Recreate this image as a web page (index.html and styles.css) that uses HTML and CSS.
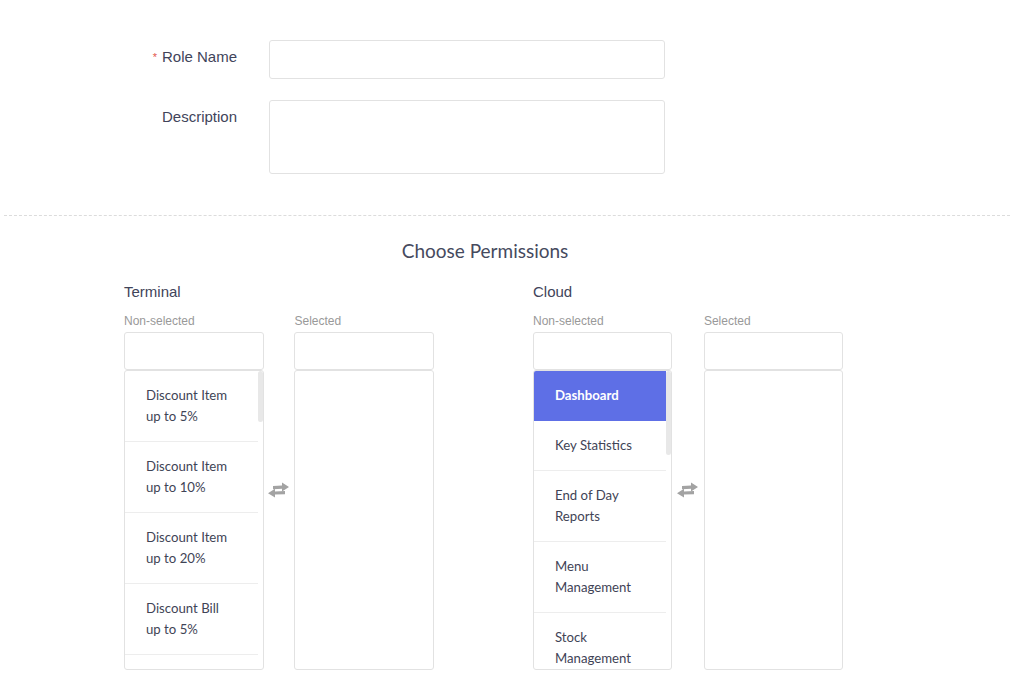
FILE: index.html
```html
<!DOCTYPE html>
<html>
<head>
<meta charset="utf-8">
<link rel="stylesheet" href="styles.css">
</head>
<body>
<div class="form">
  <div class="row">
    <label class="label"><span class="req">*</span>Role Name</label>
    <input class="input" type="text">
  </div>
  <div class="row">
    <label class="label">Description</label>
    <textarea class="textarea"></textarea>
  </div>
</div>
<div class="divider"></div>
<h2 class="title">Choose Permissions</h2>
<div class="groups">
  <div class="group">
    <div class="group-name">Terminal</div>
    <div class="dual">
      <div class="col">
        <div class="cap">Non-selected</div>
        <div class="filter"></div>
        <div class="list">
          <ul class="items">
            <li class="item">Discount Item<br>up to 5%</li>
            <li class="item">Discount Item<br>up to 10%</li>
            <li class="item">Discount Item<br>up to 20%</li>
            <li class="item">Discount Bill<br>up to 5%</li>
          </ul>
          <div class="thumb thumb-t"></div>
        </div>
      </div>
      <div class="swap">
        <svg width="24" height="18" viewBox="0 0 24 18"><path d="M6 5 L15 4.6 L15 1.5 L22 6 L15 10.5 L15 7.8 L6 8.2 Z" fill="#a3a3a3"/><path d="M18 10 L8 10.4 L8 7.8 L1 12.3 L8 16.6 L8 13.6 L18 13.2 Z" fill="#a3a3a3"/></svg>
      </div>
      <div class="col">
        <div class="cap">Selected</div>
        <div class="filter"></div>
        <div class="list"></div>
      </div>
    </div>
  </div>
  <div class="group">
    <div class="group-name">Cloud</div>
    <div class="dual">
      <div class="col">
        <div class="cap">Non-selected</div>
        <div class="filter"></div>
        <div class="list">
          <ul class="items">
            <li class="item active">Dashboard</li>
            <li class="item">Key Statistics</li>
            <li class="item">End of Day<br>Reports</li>
            <li class="item">Menu<br>Management</li>
            <li class="item">Stock<br>Management</li>
          </ul>
          <div class="thumb thumb-c"></div>
        </div>
      </div>
      <div class="swap swap-c">
        <svg width="24" height="18" viewBox="0 0 24 18"><path d="M6 5 L15 4.6 L15 1.5 L22 6 L15 10.5 L15 7.8 L6 8.2 Z" fill="#a3a3a3"/><path d="M18 10 L8 10.4 L8 7.8 L1 12.3 L8 16.6 L8 13.6 L18 13.2 Z" fill="#a3a3a3"/></svg>
      </div>
      <div class="col">
        <div class="cap">Selected</div>
        <div class="filter"></div>
        <div class="list"></div>
      </div>
    </div>
  </div>
</div>
</body>
</html>
```
FILE: styles.css
```css
html, body {
  margin: 0;
  padding: 0;
  background: #fff;
}
body {
  font-family: "Liberation Sans", Arial, sans-serif;
  color: #444759;
  width: 1010px;
  height: 694px;
  overflow: hidden;
}
.form {
  padding-top: 40px;
}
.row {
  display: flex;
  align-items: flex-start;
  margin-bottom: 21px;
}
.row:last-child {
  margin-bottom: 0;
}
.label {
  width: 237px;
  box-sizing: border-box;
  text-align: right;
  font-size: 15px;
  line-height: 20px;
  padding-top: 7px;
  margin-right: 32px;
  color: #41445a;
}
.req {
  color: #e2574c;
  font-size: 11px;
  margin-right: 5px;
  vertical-align: 1px;
}
.input, .textarea {
  box-sizing: border-box;
  width: 396px;
  border: 1px solid #e2e2e2;
  border-radius: 3px;
  margin: 0;
  padding: 0;
  outline: none;
  background: #fff;
  resize: none;
}
.input { height: 39px; }
.textarea { height: 74px; display: block; }
.divider {
  margin: 41px 0 0 4px;
  border-top: 1px dashed #dcdcdc;
}
.title {
  margin: 23px 0 0 0;
  padding-right: 40px;
  text-align: center;
  font-family: Lato, "Liberation Sans", sans-serif;
  font-weight: 400;
  font-size: 19px;
  line-height: 24px;
  color: #464a5e;
}
.groups {
  display: flex;
  gap: 99px;
  padding-left: 124px;
  margin-top: 19px;
}
.group {
  width: 310px;
}
.group-name {
  font-size: 15px;
  line-height: 20px;
  color: #41445a;
}
.dual {
  display: flex;
  margin-top: 11px;
}
.col {
  width: 140px;
}
.cap {
  font-size: 12px;
  line-height: 16px;
  color: #999;
  margin-bottom: 3px;
}
.filter {
  box-sizing: border-box;
  height: 38px;
  border: 1px solid #e2e2e2;
  border-radius: 3px;
}
.list {
  position: relative;
  box-sizing: border-box;
  height: 300px;
  margin-top: 0;
  border: 1px solid #e2e2e2;
  border-radius: 3px;
  overflow: hidden;
}
.items {
  list-style: none;
  margin: 0 5px 0 0;
  padding: 0;
}
.item {
  font-family: Lato, "Liberation Sans", sans-serif;
  font-size: 13.2px;
  line-height: 21px;
  padding: 14px 8px 14px 21px;
  border-bottom: 1px solid #ededed;
  color: #3f4456;
}
.item.active {
  background: #5e6fe6;
  color: #fff;
  font-weight: 700;
  border-bottom-color: #5e6fe6;
}
.thumb {
  position: absolute;
  right: 0;
  top: 0;
  width: 5px;
  border-radius: 3px;
  background: #e8e8e8;
}
.thumb-t { height: 51px; }
.thumb-c { height: 84px; }
.swap {
  width: 31px;
  display: flex;
  justify-content: center;
  align-items: flex-start;
  padding-top: 168px;
  box-sizing: border-box;
}
.swap-c {
  width: 32px;
}
```
